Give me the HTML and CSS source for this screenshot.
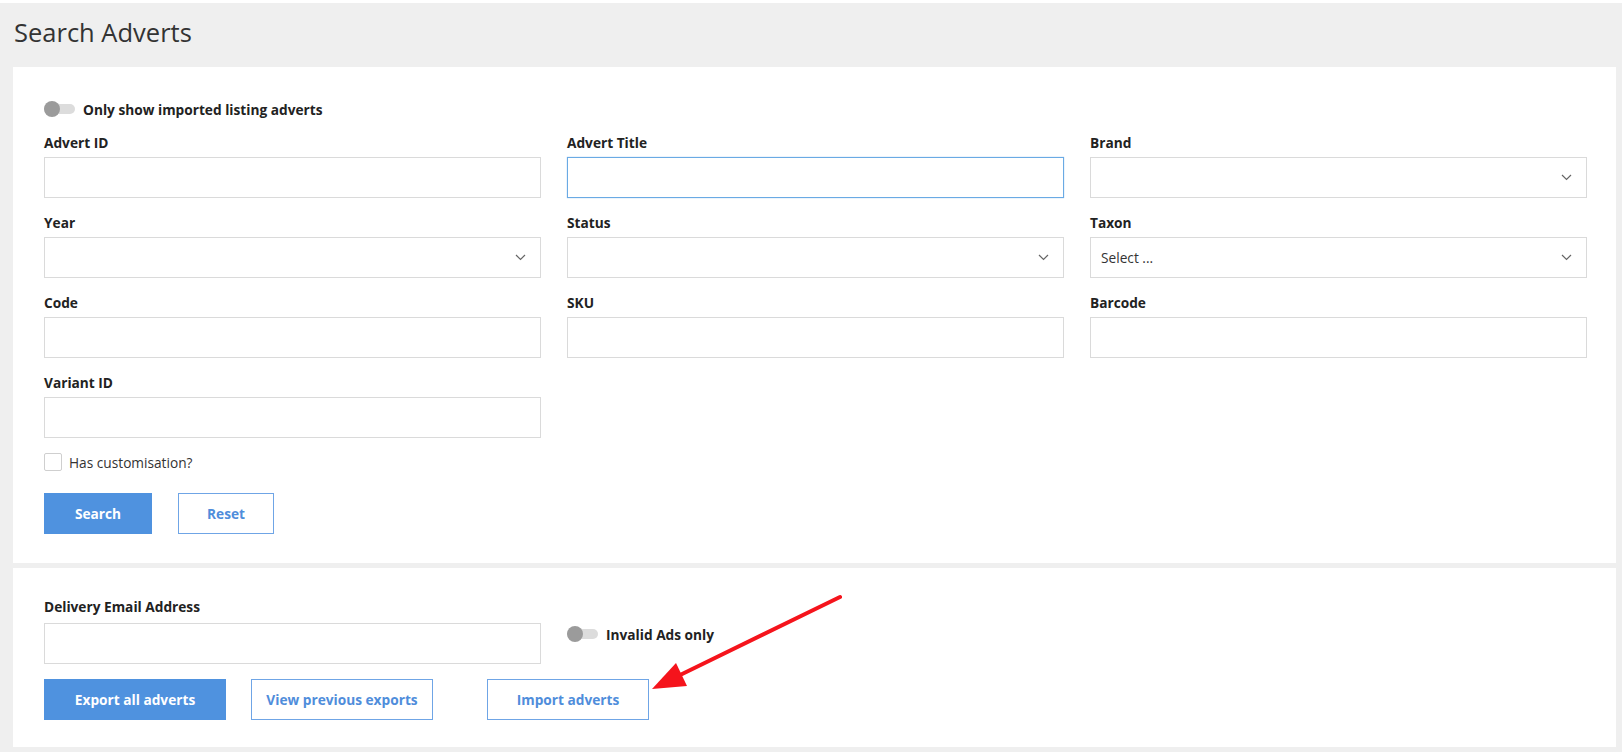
FILE: index.html
```html
<!DOCTYPE html>
<html lang="en">
<head>
<meta charset="utf-8">
<title>Search Adverts</title>
<link rel="stylesheet" href="styles.css">
</head>
<body>
<div class="page">
  <header class="header">
    <h1 class="title">Search Adverts</h1>
  </header>

  <section class="card card-search">
    <div class="toggle-row">
      <span class="toggle"><span class="knob"></span></span>
      <span class="toggle-label">Only show imported listing adverts</span>
    </div>

    <div class="grid">
      <div class="field">
        <label class="label">Advert ID</label>
        <div class="input"></div>
      </div>
      <div class="field">
        <label class="label">Advert Title</label>
        <div class="input focused"></div>
      </div>
      <div class="field">
        <label class="label">Brand</label>
        <div class="input select"><span class="value"></span><svg class="chev" width="11" height="7" viewBox="0 0 11 7"><path d="M1 1l4.5 4.5L10 1" fill="none" stroke="#666" stroke-width="1.2"/></svg></div>
      </div>

      <div class="field">
        <label class="label">Year</label>
        <div class="input select"><span class="value"></span><svg class="chev" width="11" height="7" viewBox="0 0 11 7"><path d="M1 1l4.5 4.5L10 1" fill="none" stroke="#666" stroke-width="1.2"/></svg></div>
      </div>
      <div class="field">
        <label class="label">Status</label>
        <div class="input select"><span class="value"></span><svg class="chev" width="11" height="7" viewBox="0 0 11 7"><path d="M1 1l4.5 4.5L10 1" fill="none" stroke="#666" stroke-width="1.2"/></svg></div>
      </div>
      <div class="field">
        <label class="label">Taxon</label>
        <div class="input select"><span class="value">Select ...</span><svg class="chev" width="11" height="7" viewBox="0 0 11 7"><path d="M1 1l4.5 4.5L10 1" fill="none" stroke="#666" stroke-width="1.2"/></svg></div>
      </div>

      <div class="field">
        <label class="label">Code</label>
        <div class="input"></div>
      </div>
      <div class="field">
        <label class="label">SKU</label>
        <div class="input"></div>
      </div>
      <div class="field">
        <label class="label">Barcode</label>
        <div class="input"></div>
      </div>

      <div class="field">
        <label class="label">Variant ID</label>
        <div class="input"></div>
      </div>
    </div>

    <div class="check-row">
      <span class="checkbox"></span>
      <span class="check-label">Has customisation?</span>
    </div>

    <div class="buttons">
      <button class="btn primary btn-search">Search</button>
      <button class="btn outline btn-reset">Reset</button>
    </div>
  </section>

  <section class="card card-export">
    <div class="grid">
      <div class="field">
        <label class="label label-email">Delivery Email Address</label>
        <div class="input"></div>
      </div>
      <div class="field field-toggle">
        <div class="toggle-row">
          <span class="toggle"><span class="knob"></span></span>
          <span class="toggle-label">Invalid Ads only</span>
        </div>
      </div>
    </div>
    <div class="buttons buttons-export">
      <button class="btn primary btn-export">Export all adverts</button>
      <button class="btn outline btn-view">View previous exports</button>
      <button class="btn outline btn-import">Import adverts</button>
    </div>
  </section>
</div>

<svg class="annotation" width="1622" height="752" viewBox="0 0 1622 752">
  <line x1="840" y1="597" x2="676" y2="677" stroke="#f5141c" stroke-width="4" stroke-linecap="round"/>
  <polygon points="652,689 676,663 687,686" fill="#f5141c"/>
</svg>
</body>
</html>
```

FILE: styles.css
```css
html, body {
  margin: 0;
  padding: 0;
  background: #ffffff;
}

body {
  font-family: "Open Sans", "Liberation Sans", sans-serif;
  color: #222222;
  position: relative;
  width: 1622px;
  height: 752px;
  overflow: hidden;
}

.page {
  margin-top: 3px;
  background: #efefef;
  padding: 0 6px 5px 13px;
  height: 744px;
}

.header {
  height: 64px;
  box-sizing: border-box;
  padding-top: 12px;
}

.title {
  margin: 0;
  padding-left: 1px;
  font-size: 25.5px;
  line-height: 34px;
  font-weight: 400;
  color: #333333;
}

.card {
  background: #ffffff;
  padding: 32px 29px 29px 31px;
}

.card + .card {
  margin-top: 5px;
}

.card-export {
  padding-top: 29px;
  padding-bottom: 27px;
}

.toggle-row {
  display: flex;
  align-items: center;
  height: 20px;
  gap: 8px;
}

.card-search > .toggle-row {
  margin-bottom: 14px;
}

.toggle {
  position: relative;
  display: block;
  width: 31px;
  height: 10px;
  border-radius: 5px;
  background: #dcdcdc;
}

.knob {
  position: absolute;
  left: 0;
  top: -3px;
  width: 16px;
  height: 16px;
  border-radius: 50%;
  background: #9b9b9b;
}

.toggle-label {
  font-size: 13.7px;
  font-weight: 700;
  color: #222222;
}

.grid {
  display: grid;
  grid-template-columns: repeat(3, 1fr);
  column-gap: 26px;
  row-gap: 15px;
}

.field {
  display: flex;
  flex-direction: column;
}

.label {
  display: block;
  font-size: 13.7px;
  line-height: 20px;
  font-weight: 700;
  color: #222222;
  margin-bottom: 4px;
}

.label-email {
  margin-bottom: 6px;
}

.input {
  height: 41px;
  box-sizing: border-box;
  border: 1px solid #dadada;
  background: #ffffff;
  display: flex;
  align-items: center;
  padding: 0 14px 0 10px;
}

.input.focused {
  border-color: #6aaae4;
  box-shadow: 0 0 1px #8dbdea;
}

.select .value {
  flex: 1;
  font-size: 13.7px;
  color: #333333;
}

.chev {
  display: block;
}

.field-toggle {
  padding-top: 27px;
}

.check-row {
  display: flex;
  align-items: center;
  margin-top: 15px;
  height: 18px;
  gap: 7px;
}

.checkbox {
  width: 18px;
  height: 18px;
  box-sizing: border-box;
  border: 1px solid #cfcfcf;
  border-radius: 2px;
  background: #ffffff;
}

.check-label {
  font-size: 13.7px;
  color: #333333;
}

.buttons {
  display: flex;
  margin-top: 22px;
  gap: 26px;
}

.buttons-export {
  margin-top: 15px;
  gap: 25px;
}

.btn {
  height: 41px;
  box-sizing: border-box;
  font-family: "Open Sans", "Liberation Sans", sans-serif;
  font-size: 13.7px;
  font-weight: 700;
  padding: 0;
  border-radius: 0;
  cursor: pointer;
}

.primary {
  background: #4f92df;
  border: 1px solid #4f92df;
  color: #ffffff;
}

.outline {
  background: #ffffff;
  border: 1.5px solid #6fa5e6;
  color: #4f8ddb;
}

.btn-search { width: 108px; }
.btn-reset { width: 96px; }
.btn-export { width: 182px; }
.btn-view { width: 182px; }
.btn-import { width: 162px; margin-left: 29px; }

.annotation {
  position: absolute;
  left: 0;
  top: 0;
  pointer-events: none;
}
```
